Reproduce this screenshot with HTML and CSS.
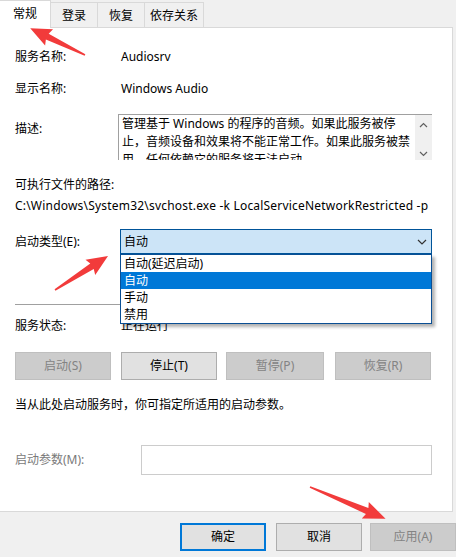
FILE: index.html
```html
<!DOCTYPE html>
<html lang="zh-CN">
<head>
<meta charset="utf-8">
<title>Windows Audio 属性</title>
<link rel="stylesheet" href="styles.css">
</head>
<body>
<div class="dialog">
  <div class="tabs">
    <div class="tab tab-active">常规</div>
    <div class="tab tab-first">登录</div>
    <div class="tab">恢复</div>
    <div class="tab tab-wide">依存关系</div>
  </div>
  <div class="panel">
    <div class="row r1"><div class="label">服务名称:</div><div class="value">Audiosrv</div></div>
    <div class="row r2"><div class="label">显示名称:</div><div class="value">Windows Audio</div></div>
    <div class="row r3">
      <div class="label label-top">描述:</div>
      <div class="desc">
        <div class="desc-text">
          <div class="line">管理基于 Windows 的程序的音频。如果此服务被停</div>
          <div class="line">止，音频设备和效果将不能正常工作。如果此服务被禁</div>
          <div class="line">用，任何依赖它的服务将无法启动</div>
        </div>
        <div class="scrollbar">
          <svg class="sb-arrow" width="9" height="6" viewBox="0 0 9 6"><path d="M1 5 L4.5 1.5 L8 5" fill="none" stroke="#606060" stroke-width="1.2"/></svg>
          <svg class="sb-arrow" width="9" height="6" viewBox="0 0 9 6"><path d="M1 1 L4.5 4.5 L8 1" fill="none" stroke="#606060" stroke-width="1.2"/></svg>
        </div>
      </div>
    </div>
    <div class="row r4"><div class="text">可执行文件的路径:</div></div>
    <div class="row r5"><div class="text path">C:\Windows\System32\svchost.exe -k LocalServiceNetworkRestricted -p</div></div>
    <div class="row r6">
      <div class="label label-select">启动类型(E):</div>
      <div class="select-wrap">
        <div class="select">
          <span>自动</span>
          <svg width="10" height="6" viewBox="0 0 10 6"><path d="M1 1 L5 5 L9 1" fill="none" stroke="#333" stroke-width="1.2"/></svg>
        </div>
        <div class="dropdown">
          <div class="opt">自动(延迟启动)</div>
          <div class="opt opt-sel">自动</div>
          <div class="opt">手动</div>
          <div class="opt">禁用</div>
        </div>
      </div>
    </div>
    <div class="sep"></div>
    <div class="row r7"><div class="label">服务状态:</div><div class="value">正在运行</div></div>
    <div class="btn-row">
      <div class="btn btn-disabled">启动(S)</div>
      <div class="btn">停止(T)</div>
      <div class="btn btn-disabled">暂停(P)</div>
      <div class="btn btn-disabled">恢复(R)</div>
    </div>
    <div class="row r8"><div class="text">当从此处启动服务时，你可指定所适用的启动参数。</div></div>
    <div class="row r9">
      <div class="label label-param">启动参数(M):</div>
      <div class="param-input"></div>
    </div>
  </div>
  <div class="footer">
    <div class="fbtn fbtn-default">确定</div>
    <div class="fbtn fbtn-cancel">取消</div>
    <div class="fbtn fbtn-disabled">应用(A)</div>
  </div>
  <svg class="annot" width="456" height="557" viewBox="0 0 456 557">
    <g fill="#f23b3b">
      <polygon transform="translate(85 55) rotate(206.1)" points="0,-0.8 42,-3.2 40,-9 61,0 40,9 42,3.2 0,0.8"/>
      <polygon transform="translate(55 290) rotate(-32.7)" points="0,-0.8 44,-3.2 42,-9 63,0 42,9 44,3.2 0,0.8"/>
      <polygon transform="translate(310 487) rotate(22.8)" points="0,-0.8 62,-3.2 60,-9 82,0 60,9 62,3.2 0,0.8"/>
    </g>
  </svg>
</div>
</body>
</html>
```
FILE: styles.css
```css
* { box-sizing: border-box; }
html, body { margin: 0; padding: 0; }
body {
  background: #f0f0f0;
  font-family: "Noto Sans", "Noto Sans CJK SC", sans-serif;
  font-size: 12px;
  color: #000;
}
.dialog {
  position: relative;
  width: 456px;
  height: 557px;
  overflow: hidden;
}
.tabs {
  display: flex;
  align-items: flex-end;
  height: 27px;
  margin-left: -1px;
}
.tab {
  height: 25px;
  width: 47px;
  border-top: 1px solid #d9d9d9;
  border-right: 1px solid #d9d9d9;
  background: #f0f0f0;
  display: flex;
  align-items: center;
  justify-content: center;
  line-height: 16px;
  padding-top: 1px;
}
.tab-active {
  height: 28px;
  width: 52px;
  margin-bottom: -1px;
  background: #fff;
  border-left: 1px solid #d9d9d9;
  position: relative;
  z-index: 1;
  padding-top: 0;
  padding-bottom: 2px;
}
.tab-wide { width: 59px; }
.panel {
  margin-left: -1px;
  width: 454px;
  height: 485px;
  background: #fff;
  border: 1px solid #d9d9d9;
  padding: 0 20px 0 15px;
  display: flex;
  flex-direction: column;
}
.row {
  display: flex;
  line-height: 16px;
}
.label { width: 106px; flex: none; }
.value { white-space: nowrap; }
.text { white-space: nowrap; }
.path { letter-spacing: 0.2px; }
.r1 { margin-top: 21px; }
.r2 { margin-top: 16px; }
.r3 { margin-top: 17px; }
.label-top { width: 103px; margin-top: 7px; }
.desc {
  flex: 1;
  height: 46px;
  border-top: 1px solid #a0a0a0;
  border-left: 1px solid #a0a0a0;
  display: flex;
  overflow: hidden;
}
.desc-text {
  flex: 1;
  padding-left: 3px;
  line-height: 18px;
  overflow: hidden;
  white-space: nowrap;
}
.scrollbar {
  width: 17px;
  background: #f0f0f0;
  display: flex;
  flex-direction: column;
  align-items: center;
  justify-content: space-between;
  padding: 7px 0 3px;
}
.sb-arrow { display: block; }
.r4 { margin-top: 17px; }
.r5 { margin-top: 5px; }
.r6 { margin-top: 15px; align-items: center; }
.label-select { width: 105px; }
.select-wrap {
  flex: 1;
  position: relative;
}
.select {
  height: 25px;
  background: #cce4f7;
  border: 1px solid #005499;
  display: flex;
  align-items: center;
  justify-content: space-between;
  padding: 0 4px 0 3px;
  line-height: 16px;
}
.select svg { display: block; }
.dropdown {
  position: absolute;
  left: 0;
  right: 0;
  top: 25px;
  height: 70px;
  background: #fff;
  border: 1px solid #0a4f94;
  box-shadow: 3px 3px 3px rgba(0, 0, 0, 0.3);
  z-index: 2;
}
.opt {
  height: 17px;
  line-height: 17px;
  padding-left: 3px;
}
.opt-sel {
  background: #0078d7;
  color: #fff;
}
.sep {
  margin-top: 50px;
  height: 1px;
  background: #a0a0a0;
}
.r7 { margin-top: 13px; }
.btn-row {
  margin-top: 18px;
  display: flex;
  gap: 10px;
}
.btn {
  width: 96px;
  height: 28px;
  border: 1px solid #adadad;
  background: #e1e1e1;
  display: flex;
  align-items: center;
  justify-content: center;
  line-height: 16px;
}
.btn-disabled {
  background: #cccccc;
  border-color: #bfbfbf;
  color: #838383;
}
.btn-row .btn:nth-child(3) { width: 98px; margin-left: -1px; }
.btn-row .btn:nth-child(4) { margin-left: 1px; }
.r8 { margin-top: 17px; }
.r9 { margin-top: 32px; align-items: center; }
.label-param { width: 126px; color: #7a7a7a; }
.param-input {
  flex: 1;
  height: 30px;
  border: 1px solid #cccccc;
  background: #fff;
}
.footer {
  display: flex;
  justify-content: flex-end;
  padding-top: 11px;
}
.fbtn {
  width: 86px;
  height: 28px;
  border: 1px solid #adadad;
  background: #e1e1e1;
  display: flex;
  align-items: center;
  justify-content: center;
  line-height: 16px;
}
.fbtn-default { border: 2px solid #0078d7; }
.fbtn-cancel { margin-left: 10px; }
.fbtn-disabled {
  margin-left: 8px;
  background: #cccccc;
  border-color: #bfbfbf;
  color: #838383;
}
.annot {
  position: absolute;
  left: 0;
  top: 0;
  pointer-events: none;
  z-index: 5;
}
```
